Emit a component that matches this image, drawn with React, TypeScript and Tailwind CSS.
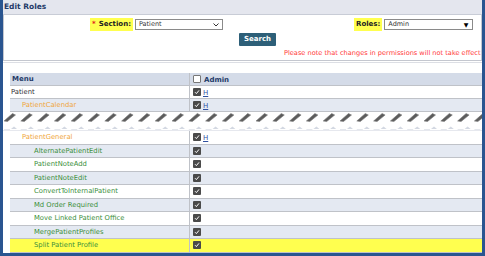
import React from "react";

const font = { fontFamily: '"DejaVu Sans", Verdana, sans-serif' };

type Row = { label: string; level: 0 | 1 | 2; h?: boolean; highlight?: boolean };

const topRows: Row[] = [
  { label: "Patient", level: 0, h: true },
  { label: "PatientCalendar", level: 1, h: true },
];

const bottomRows: Row[] = [
  { label: "PatientGeneral", level: 1, h: true },
  { label: "AlternatePatientEdit", level: 2 },
  { label: "PatientNoteAdd", level: 2 },
  { label: "PatientNoteEdit", level: 2 },
  { label: "ConvertToInternalPatient", level: 2 },
  { label: "Md Order Required", level: 2 },
  { label: "Move Linked Patient Office", level: 2 },
  { label: "MergePatientProfiles", level: 2 },
  { label: "Split Patient Profile", level: 2, highlight: true },
];

function Check() {
  return (
    <span className="inline-flex h-[8px] w-[8px] items-center justify-center rounded-[1px] bg-[#4a4a4a]">
      <svg width="6" height="6" viewBox="0 0 6 6">
        <path d="M1 3.2 L2.4 4.6 L5 1.4" stroke="#fff" strokeWidth="1" fill="none" />
      </svg>
    </span>
  );
}

function TableRow({ row, alt, h }: { row: Row; alt: boolean; h: string }) {
  const bg = row.highlight ? "bg-[#ffff4f]" : alt ? "bg-[#e4e9f2]" : "bg-white";
  const color =
    row.level === 0 ? "text-[#333]" : row.level === 1 ? "text-[#f0a63a]" : "text-[#3b8f3b]";
  const pad = row.level === 0 ? "pl-[1px]" : row.level === 1 ? "pl-[12px]" : "pl-[24px]";
  return (
    <div className={`flex ${h} ${bg} border-b border-[#bfc2c8]`}>
      <div className={`flex w-[180px] items-center border-r border-[#bfc2c8] text-[6.8px] ${pad} ${color}`}>
        {row.label}
      </div>
      <div className="flex items-center gap-[2px] pl-[3px]">
        <Check />
        {row.h ? (
          <span className="mt-[3px] text-[7px] leading-none text-[#3050a0] underline">H</span>
        ) : null}
      </div>
    </div>
  );
}

function Tear() {
  const dashes = Array.from({ length: 29 }, (_, i) => i * 16.8 + 1);
  return (
    <svg width="479" height="19" viewBox="0 0 479 19" className="block">
      <rect width="479" height="19" fill="#fff" />
      {dashes.map((x) => (
        <path
          key={"d" + x}
          d={`M${x} 9 L${x + 3.5} 9.5 L${x + 11.5} 3 L${x + 8.5} 1.5 Z`}
          fill="#5c5c5c"
          stroke="#7a7a7a"
          strokeWidth="0.6"
          strokeLinejoin="round"
        />
      ))}
      {dashes.map((x) => (
        <g key={"t" + x}>
          <path d={`M${x + 7} 17 L${x + 10} 14.5 L${x + 13} 17 Z`} fill="#d3d8e2" />
          <path d={`M${x} 17.5 L${x + 6} 17.5`} stroke="#dde1e8" strokeWidth="0.8" />
        </g>
      ))}
      <path d="M0 18.5 L479 18.5" stroke="#e6e8ee" strokeWidth="1" />
    </svg>
  );
}

export default function App() {
  return (
    <div className="h-[256px] w-[485px] bg-[#2a5590] pb-[3px] pl-[3px] pr-[3px]" style={font}>
      <div className="flex h-full flex-col overflow-hidden bg-white">
        <div className="flex h-[15px] items-center border-b border-[#c8ccd6] bg-[#e4e6ee] pl-[1px] text-[7.5px] font-bold text-[#1f3a68]">
          Edit Roles
        </div>
        <div className="relative h-[46px] overflow-hidden border border-t-0 border-[#c4c7cf] bg-white">
          <div className="absolute left-[86px] top-[3px] flex items-center gap-[2px]">
            <div className="flex h-[13px] items-center gap-[3px] bg-[#ffff4f] px-[2px] text-[7px] font-bold text-[#222]">
              <span className="text-[#e02020]">*</span>
              <span>Section:</span>
            </div>
            <div className="flex h-[11px] w-[88px] items-center justify-between border border-[#8a8a8a] bg-white pl-[3px] pr-[3px] text-[6.5px] text-[#333]">
              <span>Patient</span>
              <svg width="6" height="4" viewBox="0 0 6 4">
                <path d="M0.5 0.5 L3 3 L5.5 0.5" stroke="#333" fill="none" strokeWidth="1" />
              </svg>
            </div>
          </div>
          <div className="absolute left-[350px] top-[3px] flex items-center gap-[2px]">
            <div className="flex h-[13px] items-center bg-[#ffff4f] px-[2px] text-[7px] font-bold text-[#222]">
              Roles:
            </div>
            <div className="flex h-[11px] w-[89px] items-center justify-between border border-[#8a8a8a] bg-white pl-[3px] pr-[4px] text-[6.5px] text-[#333]">
              <span>Admin</span>
              <span className="text-[6px] leading-none text-black">▼</span>
            </div>
          </div>
          <div className="absolute left-[235px] top-[18px] flex h-[13px] w-[37px] items-center justify-center rounded-[1px] bg-[#2d5f78] text-[7px] font-bold text-white">
            Search
          </div>
          <div className="absolute left-[280px] top-[34px] whitespace-nowrap text-[6.6px] text-[#ff3838]">
            Please note that changes in permissions will not take effect until
          </div>
        </div>
        <div className="mt-[1px] h-[11px] border-t border-[#dcdee4]" />
        <div className="ml-[7px] flex flex-col">
          <div className="flex h-[13px] border-b border-[#bfc2c8] bg-[#d4dbe8]">
            <div className="flex w-[180px] items-center border-r border-[#bfc2c8] pl-[2px] text-[7px] font-bold text-[#1f3a68]">
              Menu
            </div>
            <div className="flex items-center gap-[3px] pl-[3px]">
              <span className="h-[8px] w-[8px] rounded-[1px] border border-[#777] bg-white" />
              <span className="mt-[3px] text-[7px] font-bold text-[#1f3a68]">Admin</span>
            </div>
          </div>
          {topRows.map((r, i) => (
            <TableRow key={r.label} row={r} alt={i % 2 === 1} h="h-[13px]" />
          ))}
        </div>
        <Tear />
        <div className="ml-[7px] flex flex-col">
          {bottomRows.map((r, i) => (
            <TableRow key={r.label} row={r} alt={i % 2 === 1} h="h-[13.5px]" />
          ))}
        </div>
      </div>
    </div>
  );
}
